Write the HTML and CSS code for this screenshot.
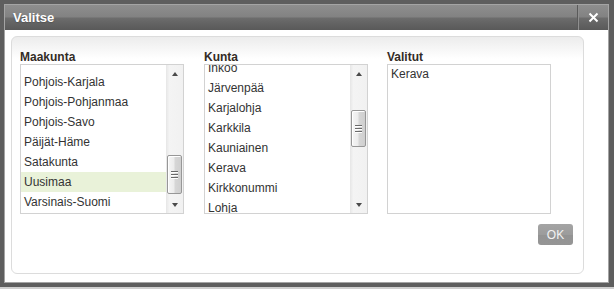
FILE: index.html
```html
<!DOCTYPE html>
<html lang="fi">

<head>
    <meta charset="UTF-8">
    <meta name="viewport" content="width=device-width, initial-scale=1.0">
    <title>Valitse</title>
    <link rel="stylesheet" href="styles.css">
</head>

<body>
    <div class="dialog">
        <div class="titlebar">
            <span class="title">Valitse</span>
            <span class="close">
                <svg width="11" height="11" viewBox="0 0 11 11">
                    <path d="M1.5 1.5 L9.5 9.5 M9.5 1.5 L1.5 9.5" stroke="#fff" stroke-width="2" fill="none"/>
                </svg>
            </span>
        </div>
        <div class="content">
            <div class="panel">
                <div class="columns">
                    <div class="col">
                        <div class="label">Maakunta</div>
                        <div class="listbox">
                            <div class="view">
                                <ul class="items maakunta">
                                    <li class="hidden-top">Pohjanmaa</li>
                                    <li>Pohjois-Karjala</li>
                                    <li>Pohjois-Pohjanmaa</li>
                                    <li>Pohjois-Savo</li>
                                    <li>Päijät-Häme</li>
                                    <li>Satakunta</li>
                                    <li class="current">Uusimaa</li>
                                    <li>Varsinais-Suomi</li>
                                </ul>
                            </div>
                            <div class="scrollbar">
                                <div class="arrow up"></div>
                                <div class="track">
                                    <div class="thumb thumb-maakunta"><i></i><i></i><i></i></div>
                                </div>
                                <div class="arrow down"></div>
                            </div>
                        </div>
                    </div>
                    <div class="col">
                        <div class="label">Kunta</div>
                        <div class="listbox">
                            <div class="view">
                                <ul class="items kunta">
                                    <li>Inkoo</li>
                                    <li>Järvenpää</li>
                                    <li>Karjalohja</li>
                                    <li>Karkkila</li>
                                    <li>Kauniainen</li>
                                    <li>Kerava</li>
                                    <li>Kirkkonummi</li>
                                    <li>Lohja</li>
                                    <li>Loviisa</li>
                                </ul>
                            </div>
                            <div class="scrollbar">
                                <div class="arrow up"></div>
                                <div class="track">
                                    <div class="thumb thumb-kunta"><i></i><i></i><i></i></div>
                                </div>
                                <div class="arrow down"></div>
                            </div>
                        </div>
                    </div>
                    <div class="col col-last">
                        <div class="label">Valitut</div>
                        <div class="listbox selected">
                            <ul class="items">
                                <li>Kerava</li>
                            </ul>
                        </div>
                    </div>
                </div>
                <div class="actions">
                    <button class="btn">OK</button>
                </div>
            </div>
        </div>
    </div>
    <div class="strip"></div>
</body>

</html>
```

FILE: styles.css
```css
* {
    margin: 0;
    padding: 0;
    box-sizing: border-box;
}

ul li {
    list-style: none;
}

body {
    background-color: #5e5e5e;
    font-family: "Liberation Sans", Arial, sans-serif;
    font-size: 12px;
    color: #333;
    height: 289px;
    overflow: hidden;
    padding-top: 4px;
    padding-left: 4px;
}

.dialog {
    width: 605px;
    border: 1px solid #a4a4a4;
    background-color: #fff;
}

.titlebar {
    height: 25px;
    display: flex;
    align-items: stretch;
    background: linear-gradient(#8e8e8e, #828282 48%, #6c6c6c 52%, #595959);
    color: #fff;
}

.title {
    flex: 1;
    padding-left: 8px;
    line-height: 25px;
    font-size: 13px;
    font-weight: bold;
    text-shadow: 0 1px 1px #555;
}

.close {
    width: 31px;
    display: flex;
    align-items: center;
    justify-content: center;
    border-left: 1px solid #5a5a5a;
    box-shadow: inset 1px 0 0 #8f8f8f;
}

.content {
    padding: 6px 24px 8px 6px;
}

.panel {
    border: 1px solid #dcdcdc;
    border-radius: 6px;
    background: linear-gradient(#ececec, #fff 22px);
    padding: 13px 10px 28px 8px;
}

.columns {
    display: flex;
}

.col {
    width: 164px;
    margin-right: 20px;
}

.col-last {
    margin-left: -1px;
    margin-right: 0;
}

.label {
    font-weight: bold;
    line-height: 14px;
    color: #332c26;
}

.listbox {
    height: 150px;
    border: 1px solid #d2d2d2;
    background-color: #fff;
    display: flex;
}

.view {
    flex: 1;
    overflow: hidden;
}

.items li {
    height: 20px;
    line-height: 20px;
    padding-left: 3px;
    white-space: nowrap;
}

.maakunta {
    margin-top: -13px;
}

/* vain edellisen rivin alaosa näkyy */
.items .hidden-top {
    line-height: 13px;
}

.kunta {
    margin-top: -7px;
}

.items .current {
    background-color: #e9f2d9;
}

.selected .items li {
    height: 16px;
    line-height: 16px;
    margin-top: 1px;
}

.scrollbar {
    width: 17px;
    display: flex;
    flex-direction: column;
    background: linear-gradient(to right, #e6e6e6, #f4f4f4 20%, #f1f1f1);
}

.arrow {
    height: 17px;
    display: flex;
    justify-content: center;
    align-items: center;
}

.arrow::after {
    content: "";
    width: 0;
    height: 0;
    border-left: 3.5px solid transparent;
    border-right: 3.5px solid transparent;
}

.up::after {
    border-bottom: 4px solid #4a4a4a;
}

.down::after {
    border-top: 4px solid #4a4a4a;
}

.track {
    flex: 1;
}

.thumb {
    margin: 0 1px;
    border: 1px solid #979797;
    border-radius: 2px;
    background: linear-gradient(to right, #f6f6f6, #ececec 45%, #d6d6d6 55%, #cfcfcf);
    display: flex;
    flex-direction: column;
    justify-content: center;
    align-items: center;
    gap: 2px;
    box-shadow: inset 1px 1px 0 #fff;
}

.thumb i {
    display: block;
    width: 7px;
    height: 1px;
    background-color: #6a6a6a;
    box-shadow: 0 1px 0 #fff;
}

.thumb-maakunta {
    margin-top: 73px;
    height: 39px;
}

.thumb-kunta {
    margin-top: 28px;
    height: 37px;
}

.actions {
    display: flex;
    justify-content: flex-end;
    margin-top: 10px;
}

.btn {
    width: 35px;
    height: 21px;
    border: none;
    border-radius: 3px;
    background: linear-gradient(#a4a4a4, #9c9c9c 50%, #939393 50%, #959595);
    color: #f2f2f2;
    font-family: "Liberation Sans", Arial, sans-serif;
    font-size: 12px;
    cursor: pointer;
}

.strip {
    margin-top: 4px;
    margin-left: -4px;
    height: 3px;
    background-color: #cfcfcf;
}
```
